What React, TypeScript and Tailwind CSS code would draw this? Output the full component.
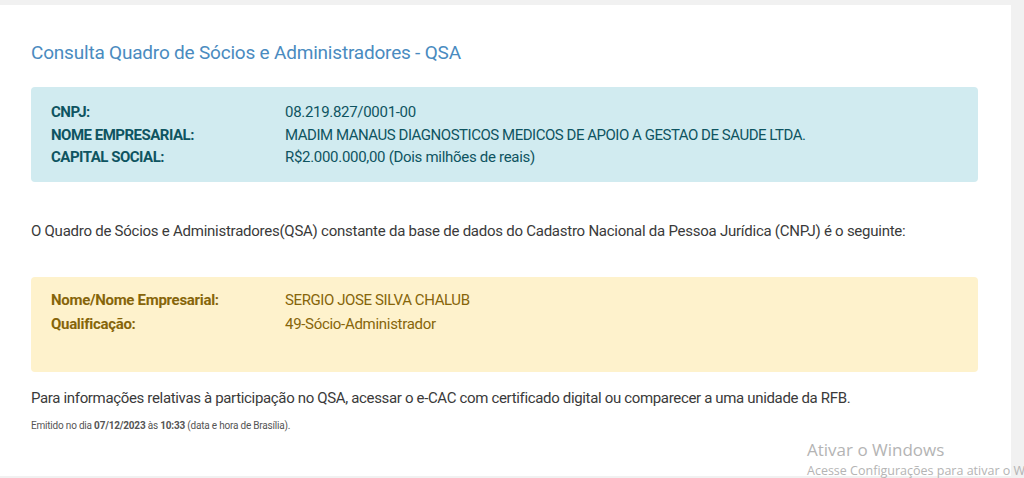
export default function App() {
  return (
    <div className="h-[478px] w-[1024px] overflow-hidden bg-[#f1f1f1] pt-[5px] font-['Roboto',sans-serif]">
      <div className="relative h-[471px] w-[1011px] bg-white px-[31px] pt-[34px]">
        <h1 className="text-[19px] leading-[28px] tracking-[-0.2px] text-[#4a8bbf]">
          Consulta Quadro de Sócios e Administradores - QSA
        </h1>

        <div className="mt-[20px] h-[95px] w-[947px] rounded-[4px] bg-[#d1ebf0] px-[20px] pt-[14px] text-[15px] leading-[22.5px] text-[#0e5461]">
          <div className="flex">
            <span className="w-[234px] font-bold tracking-[-0.5px]">CNPJ:</span>
            <span className="tracking-[-0.3px]">08.219.827/0001-00</span>
          </div>
          <div className="flex">
            <span className="w-[234px] font-bold tracking-[-0.5px]">NOME EMPRESARIAL:</span>
            <span className="tracking-[-0.47px]">MADIM MANAUS DIAGNOSTICOS MEDICOS DE APOIO A GESTAO DE SAUDE LTDA.</span>
          </div>
          <div className="flex">
            <span className="w-[234px] font-bold tracking-[-0.5px]">CAPITAL SOCIAL:</span>
            <span className="tracking-[-0.3px]">R$2.000.000,00 (Dois milhões de reais)</span>
          </div>
        </div>

        <p className="mt-[38px] text-[15px] leading-[22px] tracking-[-0.25px] text-[#3a3a3a]">
          O Quadro de Sócios e Administradores(QSA) constante da base de dados do Cadastro Nacional da Pessoa Jurídica (CNPJ) é o seguinte:
        </p>

        <div className="mt-[35px] h-[95px] w-[947px] rounded-[4px] bg-[#fef2cc] px-[20px] pt-[11px] text-[15px] leading-[24px] text-[#86650a]">
          <div className="flex">
            <span className="w-[234px] font-bold tracking-[-0.3px]">Nome/Nome Empresarial:</span>
            <span className="tracking-[-0.4px]">SERGIO JOSE SILVA CHALUB</span>
          </div>
          <div className="flex">
            <span className="w-[234px] font-bold tracking-[-0.3px]">Qualificação:</span>
            <span className="tracking-[-0.3px]">49-Sócio-Administrador</span>
          </div>
        </div>

        <p className="mt-[15px] text-[15px] leading-[22px] tracking-[-0.34px] text-[#3a3a3a]">
          Para informações relativas à participação no QSA, acessar o e-CAC com certificado digital ou comparecer a uma unidade da RFB.
        </p>
        <p className="mt-[10px] text-[10px] leading-[14px] tracking-[-0.2px] text-[#555]">
          Emitido no dia <b>07/12/2023</b> às <b>10:33</b> (data e hora de Brasília).
        </p>

        <div className="absolute left-[807px] top-[433px] whitespace-nowrap font-['Open_Sans',sans-serif] text-[#b4b4b4]">
          <div className="text-[17px] leading-[24px]">Ativar o Windows</div>
          <div className="text-[12.5px] leading-[18px]">Acesse Configurações para ativar o Windows.</div>
        </div>
      </div>
    </div>
  );
}
